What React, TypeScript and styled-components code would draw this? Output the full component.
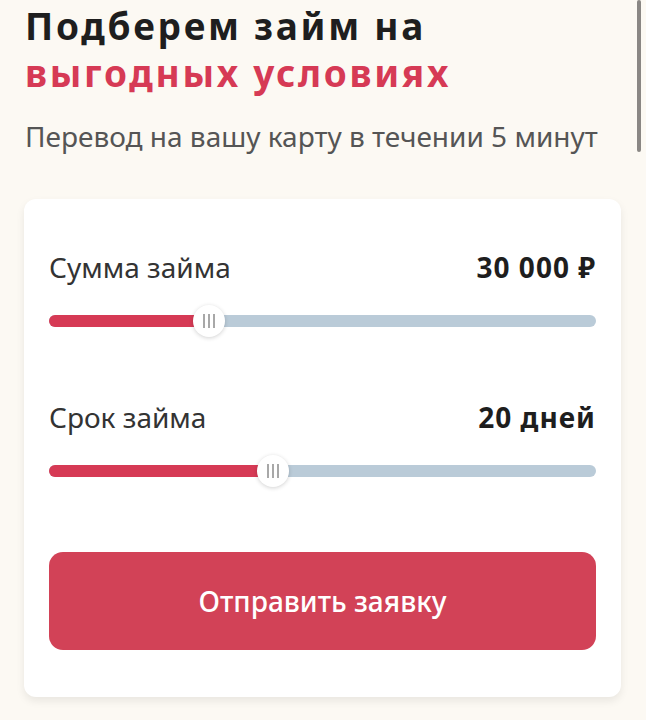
import styled, { createGlobalStyle } from 'styled-components';

const GlobalStyle = createGlobalStyle`
  html, body {
    margin: 0;
    padding: 0;
    background: #fcf9f3;
  }
  body {
    font-family: "Noto Sans", "Open Sans", Arial, sans-serif;
    color: #222;
  }
`;

const Page = styled.div`
  position: relative;
  min-height: 720px;
  padding: 0 24px;
  overflow: hidden;
`;

const ScrollIndicator = styled.div`
  position: absolute;
  top: 0;
  right: 5px;
  width: 4px;
  height: 152px;
  border-radius: 2px;
  background: #8a8784;
`;

const Heading = styled.h1`
  margin: 0;
  padding: 2px 0 0 1px;
  font-size: 37px;
  line-height: 47px;
  font-weight: 700;
  letter-spacing: 2.7px;
  color: #1e1e1e;
`;

const Accent = styled.span`
  color: #d63a55;
`;

const Subtitle = styled.p`
  margin: 23px 0 0 1px;
  font-size: 28px;
  line-height: 34px;
  color: #555;
`;

const Card = styled.div`
  display: flex;
  flex-direction: column;
  margin-top: 46px;
  width: 597px;
  box-sizing: border-box;
  background: #fff;
  border-radius: 12px;
  box-shadow: 0 4px 8px rgba(0, 0, 0, 0.08);
  padding: 50px 25px 47px;
`;

const Field = styled.div`
  margin-bottom: 72px;
`;

const FieldHead = styled.div`
  display: flex;
  justify-content: space-between;
  align-items: center;
  height: 36px;
`;

const Label = styled.span`
  font-size: 28px;
  color: #333;
`;

const Value = styled.span`
  font-size: 28px;
  font-weight: 700;
  letter-spacing: 1px;
  color: #1e1e1e;
`;

const Track = styled.div`
  position: relative;
  margin-top: 30px;
  height: 12px;
  border-radius: 6px;
  background: #bacbd8;
`;

const Fill = styled.div`
  height: 100%;
  border-radius: 6px;
  background: #d63a55;
`;

const Thumb = styled.div`
  position: absolute;
  top: 50%;
  width: 32px;
  height: 32px;
  margin: -16px 0 0 -16px;
  border-radius: 50%;
  background: #fff;
  box-shadow: 0 1px 4px rgba(0, 0, 0, 0.18);
  display: flex;
  align-items: center;
  justify-content: center;
  gap: 3px;

  span {
    width: 2px;
    height: 14px;
    background: #a8a8a8;
  }
`;

const SubmitButton = styled.button`
  display: block;
  width: 100%;
  height: 98px;
  margin-top: 3px;
  border: none;
  border-radius: 14px;
  background: #d24257;
  color: #fff;
  font-family: inherit;
  font-size: 28px;
  font-weight: 500;
  cursor: pointer;
`;

interface SliderProps {
  label: string;
  value: string;
  ratio: number;
}

const RangeField = ({ label, value, ratio }: SliderProps) => (
  <Field>
    <FieldHead>
      <Label>{label}</Label>
      <Value>{value}</Value>
    </FieldHead>
    <Track>
      <Fill style={{ width: `${ratio * 100}%` }} />
      <Thumb style={{ left: `${ratio * 100}%` }}>
        <span />
        <span />
        <span />
      </Thumb>
    </Track>
  </Field>
);

export default function App() {
  return (
    <>
      <GlobalStyle />
      <Page>
        <ScrollIndicator />
        <Heading>
          Подберем займ на
          <br />
          <Accent>выгодных условиях</Accent>
        </Heading>
        <Subtitle>Перевод на вашу карту в течении 5 минут</Subtitle>
        <Card>
          <RangeField label="Сумма займа" value="30 000 ₽" ratio={0.292} />
          <RangeField label="Срок займа" value="20 дней" ratio={0.409} />
          <SubmitButton>Отправить заявку</SubmitButton>
        </Card>
      </Page>
    </>
  );
}
